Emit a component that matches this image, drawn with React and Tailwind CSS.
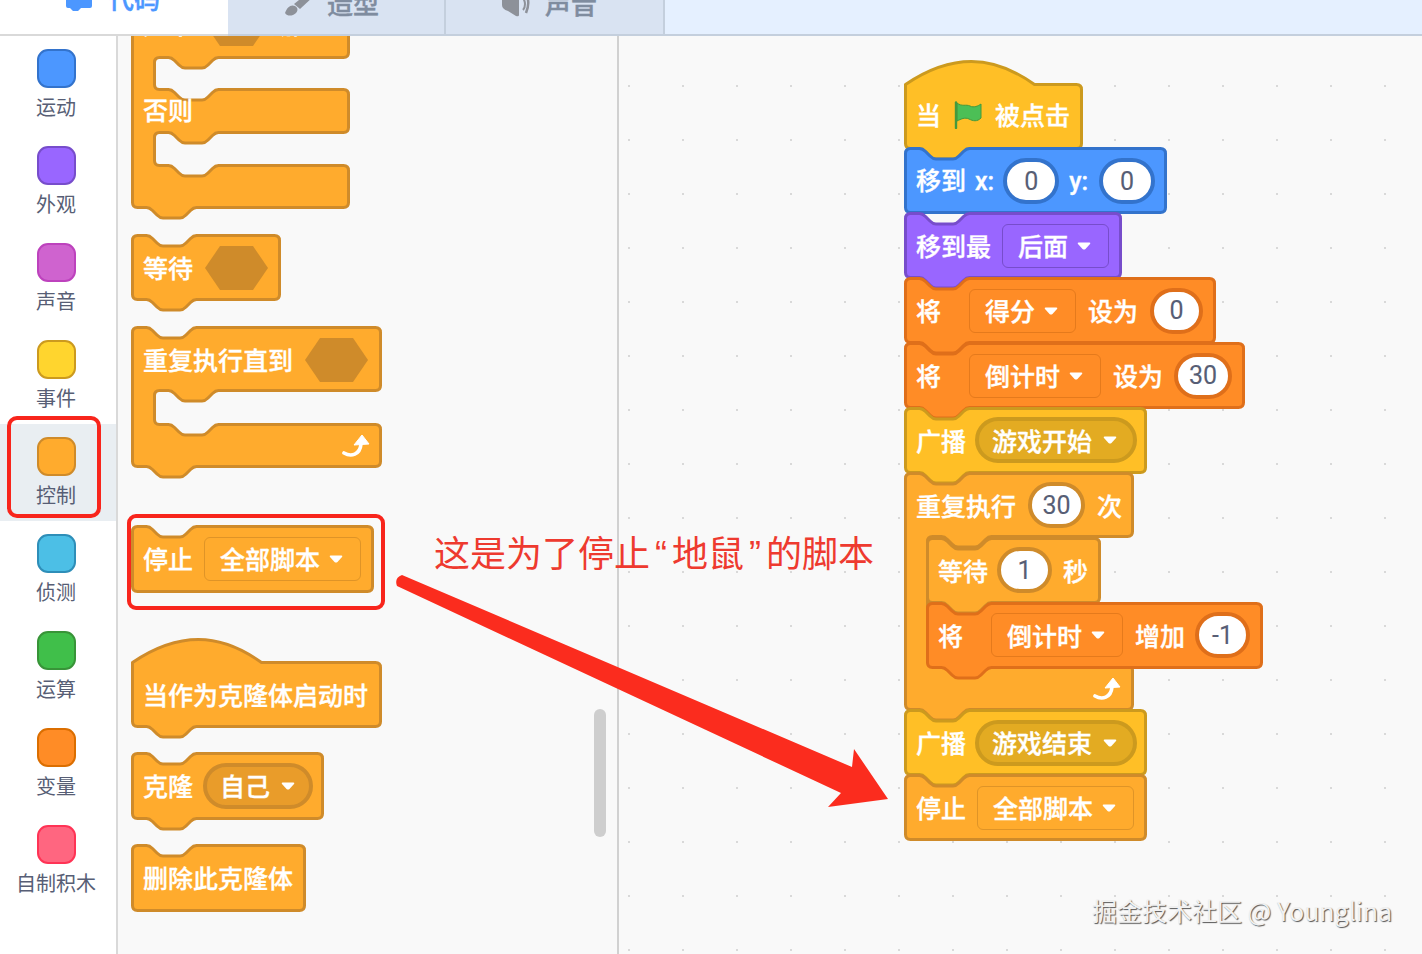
import React from "react";

const notchR = "c3 0 4.5 1.5 6 3 l4.5 4.5 c1.5 1.5 3 3 6 3 h17 c3 0 4.5 -1.5 6 -3 l4.5 -4.5 c1.5 -1.5 3 -3 6 -3";
const notchL = "c-3 0 -4.5 1.5 -6 3 l-4.5 4.5 c-1.5 1.5 -3 3 -6 3 h-17 c-3 0 -4.5 -1.5 -6 -3 l-4.5 -4.5 c-1.5 -1.5 -3 -3 -6 -3";

// builds the outline of a block, inner = list of [armBottom, nextArmTop] for c-blocks
const blockPath = (outerW, outerH, top, bottom, inner, ix) => {
  const w = outerW - 3;
  const h = outerH - 3;
  const r = 5;
  let d =
    top === "hat"
      ? `M0 23 C22 8 45 0 66 0 C88 0 108 8 129 23 H${w - r} Q${w} 23 ${w} ${23 + r}`
      : `M0 ${r} Q0 0 ${r} 0 H14 ${notchR} H${w - r} Q${w} 0 ${w} ${r}`;
  inner.forEach(([a, b]) => {
    d += ` V${a - r} Q${w} ${a} ${w - r} ${a} H${ix + 64} ${notchL} H${ix + r} Q${ix} ${a} ${ix} ${a + r}`;
    d += ` V${b - r} Q${ix} ${b} ${ix + r} ${b} H${ix + 14} ${notchR} H${w - r} Q${w} ${b} ${w} ${b + r}`;
  });
  d += ` V${h - r} Q${w} ${h} ${w - r} ${h}`;
  d += bottom === "notch" ? ` H64 ${notchL} H${r}` : ` H${r}`;
  d += ` Q0 ${h} 0 ${h - r} Z`;
  return d;
};

const colors = {
  control: ["#ffab2d", "#cf8b2a"],
  event: ["#ffbf26", "#cc9a1e"],
  motion: ["#4c97ff", "#3373cc"],
  looks: ["#9966ff", "#774dcb"],
  data: ["#ff8c26", "#df6f1a"],
};

const Shape = ({ w, h, type = "control", top = "notch", bottom = "notch", inner = [], ix = 22 }) => (
  <svg width={w} height={h} className="absolute left-0 top-0 overflow-visible">
    <path
      transform="translate(1.5 1.5)"
      d={blockPath(w, h, top, bottom, inner, ix)}
      fill={colors[type][0]}
      stroke={colors[type][1]}
      strokeWidth="3"
      strokeLinejoin="round"
    />
  </svg>
);

const Row = ({ className = "h-[67px]", children }) => (
  <div className={`relative flex w-max items-center whitespace-nowrap pl-3 text-[25px] font-medium leading-none text-white [-webkit-text-stroke:0.35px_#fff] ${className}`}>
    {children}
  </div>
);

const Caret = () => (
  <svg width="14" height="8" viewBox="0 0 14 8" className="shrink-0">
    <path d="M1.5 0.5 H12.5 Q14 0.5 13 2 L8.5 7 Q7 8 5.5 7 L1 2 Q0 0.5 1.5 0.5 Z" fill="#fff" />
  </svg>
);

const Hex = () => (
  <svg width="63" height="44" viewBox="0 0 63 44" className="shrink-0">
    <polygon points="0,22 15,0 48,0 63,22 48,44 15,44" fill="#cf8b2a" />
  </svg>
);

const Num = ({ className = "w-[56px]", border = "border-[#3373cc]", children }) => (
  <span className={`flex h-[46px] items-center justify-center rounded-full border-4 bg-white font-['Roboto',sans-serif] font-normal text-[#575e75] [-webkit-text-stroke:0.1px_#575e75] ${className} ${border}`}>
    {children}
  </span>
);

const Menu = ({ border, children }) => (
  <span className={`flex h-[44px] items-center gap-[9px] rounded-md border pl-[15px] pr-[17px] ${border}`}>
    {children}
    <Caret />
  </span>
);

const MenuPill = ({ className, children }) => (
  <span className={`flex h-[46px] items-center gap-[11px] rounded-full border-4 pl-[13px] ${className}`}>
    {children}
    <Caret />
  </span>
);

const LoopArrow = ({ className }) => (
  <svg width="28" height="24" viewBox="0 0 28 24" className={`absolute ${className}`}>
    <path d="M2 19 C9 23 18 21 19 10" fill="none" stroke="#fff" strokeWidth="3.6" strokeLinecap="round" />
    <path d="M12 11 L20 1 L27 10 Z" fill="#fff" stroke="#fff" strokeLinejoin="round" />
  </svg>
);

const Flag = () => (
  <svg width="28" height="28" viewBox="0 0 28 28" className="shrink-0">
    <path d="M3 2 C8 6 12 3 16 5 C20 7 24 5 27 3 V17 C23 21 19 20 15 18 C11 16 7 18 3 20 Z" fill="#4cbf56" stroke="#45993d" strokeWidth="1" />
    <path d="M2 1.5 V27" stroke="#45993d" strokeWidth="2.4" strokeLinecap="round" />
  </svg>
);

const categories = [
  ["运动", "bg-[#4c97ff] border-[#3373cc]"],
  ["外观", "bg-[#9966ff] border-[#774dcb]"],
  ["声音", "bg-[#cf63cf] border-[#bd42bd]"],
  ["事件", "bg-[#ffd52e] border-[#cc9a1e]"],
  ["控制", "bg-[#ffab2d] border-[#cf8b2a]"],
  ["侦测", "bg-[#4cbfe6] border-[#2e8eb8]"],
  ["运算", "bg-[#40bf4a] border-[#389438]"],
  ["变量", "bg-[#ff8c26] border-[#db6e00]"],
  ["自制积木", "bg-[#ff6680] border-[#ff3355]"],
];

const Tabs = () => (
  <div className="flex h-[36px] shrink-0 border-b-2 border-[#c4cfdd] bg-[#e5f0ff]">
    <div className="-mb-[2px] flex h-[36px] w-[228px] items-end gap-4 overflow-hidden border-b-2 border-[#d9d9d9] bg-white pb-[23px] pl-[66px] text-[26px] font-medium leading-none text-[#4c97ff] [-webkit-text-stroke:0.4px_#4c97ff]">
      <svg width="26" height="12" viewBox="0 0 26 12" className="mb-[-1px] shrink-0">
        <path d="M0 0 H26 V6 Q26 8 24 8 H15 L12 11 H7 L4 8 H2 Q0 8 0 6 Z" fill="#4c97ff" />
      </svg>
      <span>代码</span>
    </div>
    <div className="flex w-[218px] items-end gap-[15px] overflow-hidden border-r-2 border-[#c4cfdd] bg-[#d9e3f2] pb-[18px] pl-[56px] text-[26px] font-medium leading-none text-[#7f8c9f] [-webkit-text-stroke:0.4px_#7f8c9f]">
      <svg width="28" height="18" viewBox="0 0 28 18" className="shrink-0">
        <path d="M20 -2 H30 L16 11 L10 6 Z" fill="#8d9199" />
        <path d="M1 15 C3 9 7 6 11 8 C15 10 14 15 9 17 C6 18 3 18 1 15 Z" fill="#8d9199" />
      </svg>
      <span>造型</span>
    </div>
    <div className="flex w-[219px] items-end gap-[15px] overflow-hidden border-r-2 border-[#c4cfdd] bg-[#d9e3f2] pb-[18px] pl-[56px] text-[26px] font-medium leading-none text-[#7f8c9f] [-webkit-text-stroke:0.4px_#7f8c9f]">
      <svg width="28" height="18" viewBox="0 0 28 18" className="mb-[-1px] shrink-0">
        <path d="M0 -2 H17 V16 Q17 18 14 17 L6 12 Q0 10 0 6 Z" fill="#8d9199" />
        <path d="M21 -1 Q23 2 23 5 Q23 9 21 11" fill="none" stroke="#8d9199" strokeWidth="2" />
        <path d="M25 -2 Q28 4 24 14" fill="none" stroke="#8d9199" strokeWidth="2.5" />
      </svg>
      <span>声音</span>
    </div>
  </div>
);

const Sidebar = () => (
  <div className="flex w-[118px] shrink-0 flex-col border-r-2 border-[#d9d9d9] bg-white">
    {categories.map(([label, color]) => (
      <div
        key={label}
        className={`flex h-[97px] flex-col items-center pr-1 pt-[13px] ${label === "控制" ? "bg-[#e9eef2]" : ""}`}
      >
        <span className={`h-[39px] w-[39px] rounded-[11px] border-2 ${color}`} />
        <span className="mt-[9px] whitespace-nowrap text-[20px] leading-none text-[#575e75]">{label}</span>
      </div>
    ))}
  </div>
);

const Palette = () => (
  <div className="relative flex w-[501px] shrink-0 flex-col overflow-hidden border-r-2 border-[#d1d1d1] bg-[#f9f9f9] pl-[13px]">
    <div className="relative -mt-[44px] h-[242px] shrink-0">
      <Shape w={219} h={217} inner={[[64, 96], [139, 172]]} />
      <Row className="h-[63px] gap-3">
        <span>如果</span>
        <Hex />
        <span>那么</span>
      </Row>
      <span className="absolute left-3 top-[105px] text-[25px] font-medium leading-[25px] text-white [-webkit-text-stroke:0.35px_#fff]">否则</span>
    </div>
    <div className="relative h-[92px] shrink-0">
      <Shape w={150} h={67} />
      <Row className="h-[67px] gap-3">
        <span>等待</span>
        <Hex />
      </Row>
    </div>
    <div className="relative h-[199px] shrink-0">
      <Shape w={251} h={142} inner={[[63, 97]]} />
      <Row className="h-[67px] gap-3">
        <span>重复执行直到</span>
        <Hex />
      </Row>
      <LoopArrow className="left-[211px] top-[108px]" />
    </div>
    <div className="relative h-[113px] shrink-0">
      <Shape w={243} h={68} bottom="flat" />
      <Row className="h-[67px] gap-[11px]">
        <span>停止</span>
        <Menu border="border-[#df9427]">全部脚本</Menu>
      </Row>
    </div>
    <div className="relative h-[114px] shrink-0">
      <Shape w={251} h={90} top="hat" />
      <div className="pt-[23px]">
        <Row>
          <span>当作为克隆体启动时</span>
        </Row>
      </div>
    </div>
    <div className="relative h-[92px] shrink-0">
      <Shape w={193} h={68} />
      <Row className="h-[67px] gap-[10px]">
        <span>克隆</span>
        <MenuPill className="border-[#cf8b2a] bg-[#e99c2a] pr-[14px]">自己</MenuPill>
      </Row>
    </div>
    <div className="relative shrink-0">
      <Shape w={175} h={68} bottom="flat" />
      <Row>
        <span>删除此克隆体</span>
      </Row>
    </div>
    <div className="absolute left-[476px] top-[673px] h-[128px] w-[12px] rounded-full bg-[#cecece]" />
  </div>
);

const Script = () => (
  <div className="absolute left-[285px] top-[24px] flex flex-col">
    <div className="relative h-[87px]">
      <Shape w={179} h={90} type="event" top="hat" />
      <div className="pt-[21px]">
        <Row className="h-[67px] gap-[13px]">
          <span>当</span>
          <Flag />
          <span>被点击</span>
        </Row>
      </div>
    </div>
    <div className="relative h-[65px]">
      <Shape w={263} h={67} type="motion" bottom="flat" />
      <Row className="h-[68px] gap-[9px] font-['Roboto','Noto_Sans_CJK_SC',sans-serif]">
        <span>移到</span>
        <span>x:</span>
        <Num>0</Num>
        <span className="ml-[1px]">y:</span>
        <Num className="ml-[2px] w-[56px]">0</Num>
      </Row>
    </div>
    <div className="relative h-[65px]">
      <Shape w={218} h={67} type="looks" />
      <Row className="h-[67px] gap-[11px]">
        <span>移到最</span>
        <Menu border="border-[#774dcb]">后面</Menu>
      </Row>
    </div>
    <div className="relative h-[65px]">
      <Shape w={312} h={67} type="data" />
      <Row className="h-[67px] gap-[12px]">
        <span className="mr-[16px]">将</span>
        <Menu border="border-[#e57a1c]">得分</Menu>
        <span>设为</span>
        <Num className="w-[53px]" border="border-[#df6f1a]">0</Num>
      </Row>
    </div>
    <div className="relative h-[65px]">
      <Shape w={341} h={67} type="data" />
      <Row className="h-[67px] gap-[12px]">
        <span className="mr-[16px]">将</span>
        <Menu border="border-[#e57a1c]">倒计时</Menu>
        <span>设为</span>
        <Num className="-ml-[1px] w-[58px]" border="border-[#df6f1a]">30</Num>
      </Row>
    </div>
    <div className="relative h-[65px]">
      <Shape w={243} h={67} type="event" />
      <Row className="h-[66px] gap-[9px]">
        <span>广播</span>
        <MenuPill className="border-[#cc9a1e] bg-[#e3ab22] pr-[16px]">游戏开始</MenuPill>
      </Row>
    </div>
    <div className="relative h-[237px]">
      <Shape w={230} h={239} inner={[[63, 192]]} />
      <Row className="h-[66px] gap-[12px]">
        <span>重复执行</span>
        <Num className="w-[57px]" border="border-[#cf8b2a]">30</Num>
        <span>次</span>
      </Row>
      <div className="absolute left-[22px] top-[65px] w-max">
        <div className="relative h-[65px]">
          <Shape w={175} h={67} />
          <Row className="h-[66px] gap-[9px]">
            <span>等待</span>
            <Num className="w-[55px]" border="border-[#cf8b2a]">1</Num>
            <span className="ml-[2px]">秒</span>
          </Row>
        </div>
        <div className="relative h-[65px]">
          <Shape w={337} h={67} type="data" />
          <Row className="h-[66px] gap-[12px]">
            <span className="mr-[16px]">将</span>
            <Menu border="border-[#e57a1c]">倒计时</Menu>
            <span>增加</span>
            <Num className="-ml-[2px] w-[55px]" border="border-[#df6f1a]">-1</Num>
          </Row>
        </div>
      </div>
      <LoopArrow className="left-[189px] top-[205px]" />
    </div>
    <div className="relative h-[65px]">
      <Shape w={243} h={67} type="event" />
      <Row className="h-[67px] gap-[9px]">
        <span>广播</span>
        <MenuPill className="border-[#cc9a1e] bg-[#e3ab22] pr-[16px]">游戏结束</MenuPill>
      </Row>
    </div>
    <div className="relative">
      <Shape w={243} h={67} bottom="flat" />
      <Row className="h-[67px] gap-[11px]">
        <span>停止</span>
        <Menu border="border-[#df9427]">全部脚本</Menu>
      </Row>
    </div>
  </div>
);

const Workspace = () => (
  <div className="relative min-w-0 flex-1 bg-[#f9f9f9] bg-[radial-gradient(#d9d9d9_1px,transparent_1.5px)] bg-[size:54px_54px] bg-[position:-17px_23px]">
    <Script />
  </div>
);

export default function App() {
  return (
    <div className="relative flex h-[954px] w-[1422px] flex-col overflow-hidden font-['Noto_Sans_CJK_SC','Noto_Sans',sans-serif]">
      <Tabs />
      <div className="flex min-h-0 flex-1">
        <Sidebar />
        <Palette />
        <Workspace />
      </div>

      {/* red annotations pasted over the screenshot */}
      <div className="absolute left-[7px] top-[416px] h-[102px] w-[94px] rounded-[10px] border-4 border-[#f8251c]" />
      <div className="absolute left-[127px] top-[514px] h-[96px] w-[258px] rounded-[9px] border-4 border-[#f8251c]" />
      <div className="absolute left-[434px] top-[529px] whitespace-nowrap text-[36px] font-normal leading-[44px] text-[#ee3a2f]">
        这是为了停止
        <span className="mx-[5px] font-['Liberation_Sans',sans-serif]">“</span>
        地鼠
        <span className="mx-[5px] font-['Liberation_Sans',sans-serif]">”</span>
        的脚本
      </div>
      <svg width="1422" height="954" className="pointer-events-none absolute left-0 top-0">
        <path
          d="M402 575 L852 767 L854 749 L888 799 L828 807 L841 793 L397 586 Q394 578 402 575 Z"
          fill="#fb2c1e"
        />
      </svg>
      <div className="absolute left-[1092px] top-[894px] whitespace-nowrap text-[25px] leading-[32px] text-[#f1f1f1] [text-shadow:1px_1px_1px_#555]">
        掘金技术社区 @ Younglina
      </div>
    </div>
  );
}
